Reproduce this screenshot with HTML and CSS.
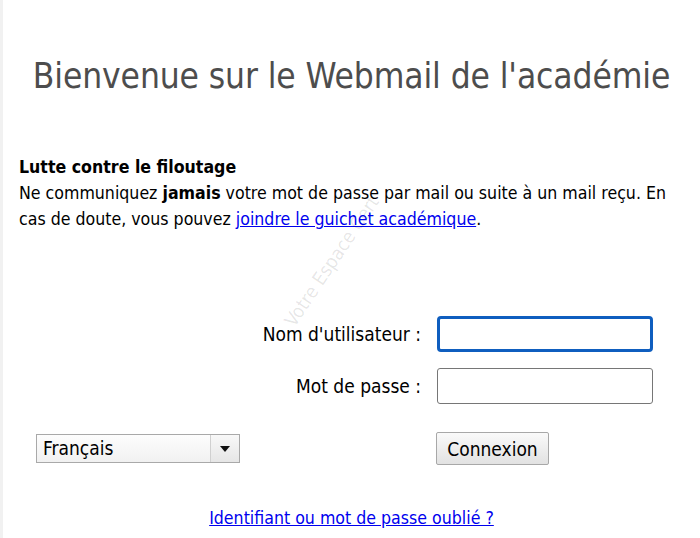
FILE: index.html
```html
<!DOCTYPE html>
<html lang="fr">
<head>
<meta charset="utf-8">
<title>Webmail</title>
<link rel="stylesheet" href="styles.css">
</head>
<body>
<div class="page">
  <h1 class="title">Bienvenue sur le Webmail de l'académie</h1>
  <div class="notice">
    <p class="notice-title">Lutte contre le filoutage</p>
    <p class="notice-text">Ne communiquez <b>jamais</b> votre mot de passe par mail ou suite à un mail reçu. En cas de doute, vous pouvez <a href="#">joindre le guichet académique</a>.</p>
  </div>
  <form class="login">
    <div class="row">
      <label class="lbl" for="user">Nom d'utilisateur :</label>
      <input class="field focus" id="user" type="text">
    </div>
    <div class="row">
      <label class="lbl" for="pass">Mot de passe :</label>
      <input class="field" id="pass" type="password">
    </div>
    <div class="row row-actions">
      <div class="lang-cell">
        <div class="select"><span class="select-val">Français</span><span class="select-btn"><span class="tri"></span></span></div>
      </div>
      <button type="button" class="btn">Connexion</button>
    </div>
  </form>
  <div class="forgot"><a href="#">Identifiant ou mot de passe oublié ?</a></div>
  <div class="watermark">Votre Espace Cert</div>
</div>
</body>
</html>
```
FILE: styles.css
```css
html, body { margin: 0; padding: 0; }
body {
  background: #fff;
  font-family: "DejaVu Sans Condensed", "DejaVu Sans", sans-serif;
  color: #000;
  border-left: 3px solid #f1f1f1;
  min-height: 538px;
  box-sizing: border-box;
}
.page {
  position: relative;
  padding: 0 16px;
  width: 697px;
  box-sizing: border-box;
}
.title {
  margin: 0 -16px;
  padding-top: 53px;
  font-weight: normal;
  font-size: 35px;
  letter-spacing: -0.1px;
  line-height: 46px;
  color: #4d4d4d;
  text-align: center;
  white-space: nowrap;
}
.notice { margin-top: 55px; font-size: 17.6px; line-height: 26px; }
.notice p { margin: 0; }
.notice-title { font-weight: bold; }
.notice a { color: #0000ee; }
.login { margin-top: 84px; }
.row { display: flex; align-items: center; margin-bottom: 16px; }
.lbl {
  width: 418px;
  text-align: right;
  font-size: 19px;
  padding-right: 16px;
  box-sizing: border-box;
}
.field {
  width: 216px;
  height: 36px;
  box-sizing: border-box;
  border: 1px solid #767676;
  border-radius: 3px;
  margin: 0;
  padding: 0 6px;
  font-size: 16px;
}
.field.focus { border: 3px solid #0f5ebf; border-radius: 4px; outline: none; }
.row-actions { margin-top: 28px; }
.lang-cell { width: 417px; padding-left: 17px; box-sizing: border-box; }
.select {
  width: 204px;
  height: 29px;
  box-sizing: border-box;
  border: 1px solid #a9a9a9;
  display: flex;
  background: linear-gradient(#fdfdfd, #f1f1f1);
}
.select-val { flex: 1; font-size: 19px; line-height: 27px; padding-left: 6px; }
.select-btn {
  width: 28px;
  border-left: 1px solid #d0d0d0;
  display: flex; align-items: center; justify-content: center;
  background: linear-gradient(#f8f8f8, #e6e6e6);
}
.tri { width: 0; height: 0; border-left: 5px solid transparent; border-right: 5px solid transparent; border-top: 6px solid #111; }
.btn {
  margin: 0;
  width: 113px;
  height: 33px;
  font-family: inherit;
  font-size: 19px;
  color: #000;
  border: 1px solid #a8a8a8;
  border-radius: 2px;
  background: linear-gradient(#fafafa, #e2e2e2);
  padding: 0;
}
.forgot { text-align: center; margin-top: 43px; font-size: 17.6px; }
.forgot a { color: #0000ee; }
.watermark {
  position: absolute;
  left: 252px;
  top: 250px;
  font-size: 19px;
  color: rgba(0,0,0,0.1);
  transform: rotate(-56deg);
  white-space: nowrap;
  pointer-events: none;
}
```
